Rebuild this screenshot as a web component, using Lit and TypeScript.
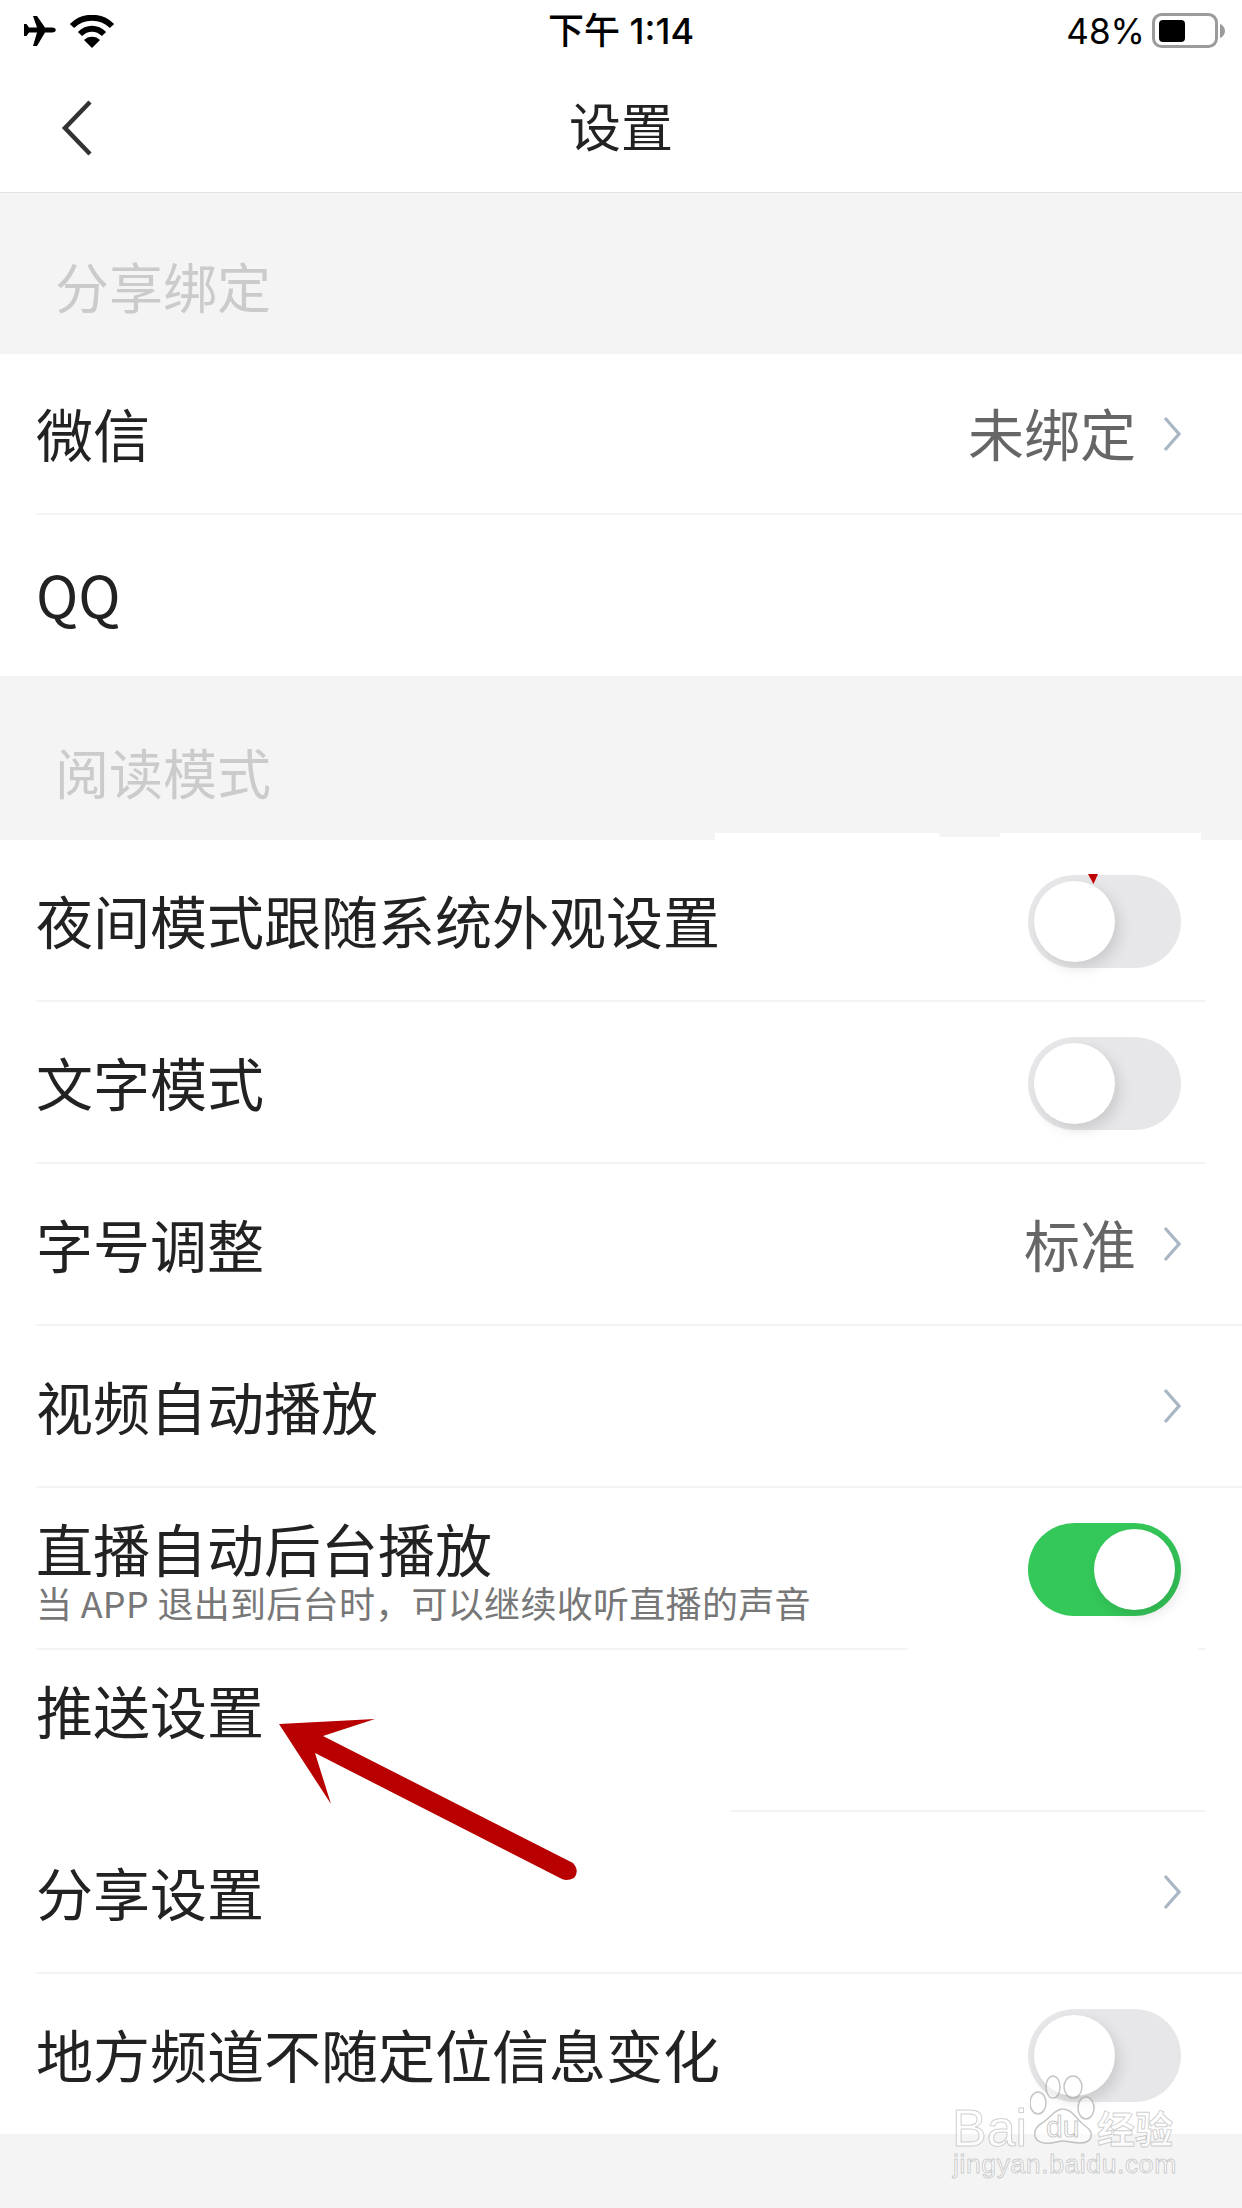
import {LitElement, css, html, svg, nothing} from 'lit'
import {customElement} from 'lit/decorators.js'

type Row = {
  label: string
  sub?: string
  value?: string
  chevron?: boolean
  toggle?: 'on' | 'off'
  line?: 'full' | 'inset' | 'none'
  raised?: boolean
}

const shareRows: Row[] = [
  {label: '微信', value: '未绑定', chevron: true, line: 'full'},
  {label: 'QQ', line: 'none'},
]

const readRows: Row[] = [
  {label: '夜间模式跟随系统外观设置', toggle: 'off', line: 'inset'},
  {label: '文字模式', toggle: 'off', line: 'inset'},
  {label: '字号调整', value: '标准', chevron: true, line: 'full'},
  {label: '视频自动播放', chevron: true, line: 'full'},
  {label: '直播自动后台播放', sub: '当 APP 退出到后台时，可以继续收听直播的声音', toggle: 'on', line: 'inset'},
  {label: '推送设置', raised: true, line: 'inset'},
  {label: '分享设置', chevron: true, line: 'full'},
  {label: '地方频道不随定位信息变化', toggle: 'off', line: 'full'},
]

const chevron = svg`<svg class="chev" width="18" height="36" viewBox="0 0 18 36"><path d="M2 2 L16 18 L2 34" fill="none" stroke="#a9b6c4" stroke-width="3.2"/></svg>`

@customElement('app-root')
export class AppRoot extends LitElement {
  static styles = css`
    :host {
      display: block;
      position: relative;
      width: 1242px;
      height: 2208px;
      overflow: hidden;
      background: #f4f4f4;
      font-family: "Noto Sans CJK SC", "Liberation Sans", sans-serif;
      color: #222;
    }

    .status {
      display: flex;
      align-items: center;
      justify-content: space-between;
      height: 62px;
      padding: 0 16px 0 24px;
      background: #fff;
      color: #000;
      font-size: 36px;
    }

    .status-left, .status-right {
      display: flex;
      align-items: center;
    }

    .status-left { width: 232px; gap: 13px; }
    .status-right { width: 240px; justify-content: flex-end; gap: 7px; }

    .time {
      font-family: Inter, "Noto Sans CJK SC", sans-serif;
      font-size: 36px;
      font-weight: 500;
      line-height: 62px;
    }

    .percent {
      font-family: Inter, "Liberation Sans", sans-serif;
      font-size: 35px;
      line-height: 62px;
    }

    .nav {
      display: flex;
      align-items: center;
      justify-content: center;
      position: relative;
      box-sizing: border-box;
      height: 131px;
      padding-bottom: 6px;
      background: #fff;
      border-bottom: 1px solid #e3e3e3;
      font-size: 52px;
      color: #222;
    }

    .back {
      position: absolute;
      left: 60px;
      top: 38px;
    }

    .section-head {
      display: flex;
      align-items: flex-end;
      box-sizing: border-box;
      height: 161px;
      padding: 0 0 36px 55px;
      font-size: 54px;
      line-height: 64px;
      color: #cbcbcb;
      background: #f4f4f4;
    }

    .section-head.second {
      height: 164px;
    }

    .row {
      height: 162px;
      box-sizing: border-box;
      padding-left: 36px;
      background: #fff;
    }

    .row.share {
      height: 161px;
    }

    .row-inner {
      display: flex;
      align-items: center;
      justify-content: space-between;
      box-sizing: border-box;
      height: 100%;
      border-bottom: 2px solid #f4f4f4;
    }

    .row.inset .row-inner {
      margin-right: 37px;
      padding-right: 24px;
    }

    .row.full .row-inner {
      padding-right: 61px;
    }

    .row.none .row-inner {
      border-bottom-color: transparent;
      padding-right: 61px;
    }

    .text {
      margin-bottom: 3px;
    }

    .label {
      font-size: 57px;
      line-height: 70px;
      color: #222;
    }

    .row.raised .label {
      margin-bottom: 39px;
    }

    .sub {
      font-size: 36px;
      line-height: 40px;
      letter-spacing: 0.3px;
      color: #777;
    }

    .right {
      display: flex;
      align-items: center;
      gap: 27px;
    }

    .value {
      margin-bottom: 3px;
      font-size: 56px;
      line-height: 70px;
      color: #666;
    }

    .chev {
      display: block;
    }

    .toggle {
      position: relative;
      flex: none;
      width: 153px;
      height: 93px;
      margin-top: 3px;
      border-radius: 47px;
      background: #e7e7e9;
    }

    .toggle.on {
      background: #34c759;
    }

    .knob {
      position: absolute;
      top: 6px;
      left: 6px;
      width: 81px;
      height: 81px;
      border-radius: 50%;
      background: #fff;
      box-shadow: 5px 6px 14px rgba(0, 0, 0, 0.12);
    }

    .toggle.on .knob {
      left: 66px;
    }

    .patch {
      position: absolute;
      background: #fff;
    }

    .patch.grey {
      background: #f4f4f4;
    }

    .marker {
      position: absolute;
      left: 1087px;
      top: 874px;
    }

    .arrow {
      position: absolute;
      left: 0;
      top: 0;
      pointer-events: none;
    }

    .watermark {
      position: absolute;
      left: 950px;
      top: 2070px;
      width: 230px;
      height: 130px;
      color: rgba(255, 255, 255, 0.7);
      font-family: "Liberation Sans", "Noto Sans CJK SC", sans-serif;
      -webkit-text-stroke: 1px rgba(150, 150, 150, 0.45);
    }

    .wm-top {
      position: absolute;
      left: 2px;
      top: 30px;
      font-size: 52px;
      line-height: 56px;
      white-space: nowrap;
    }

    .wm-cn {
      position: absolute;
      left: 147px;
      top: 32px;
      font-family: "Noto Sans CJK SC", sans-serif;
      font-size: 38px;
      line-height: 50px;
      font-weight: 700;
      white-space: nowrap;
    }

    .wm-url {
      position: absolute;
      left: 3px;
      top: 77px;
      font-size: 26.5px;
      line-height: 34px;
      letter-spacing: 0.6px;
      white-space: nowrap;
    }

    .paw {
      position: absolute;
      left: 80px;
      top: 5px;
    }

    .paw text {
      font-family: "Liberation Sans", sans-serif;
      font-size: 30px;
      stroke-width: 1px;
    }
  `

  renderRow(r: Row, extra = '') {
    return html`
      <div class="row ${r.line ?? 'none'} ${r.raised ? 'raised' : ''} ${extra}">
        <div class="row-inner">
          <div class="text">
            <div class="label">${r.label}</div>
            ${r.sub ? html`<div class="sub">${r.sub}</div>` : nothing}
          </div>
          <div class="right">
            ${r.value ? html`<div class="value">${r.value}</div>` : nothing}
            ${r.chevron ? chevron : nothing}
            ${r.toggle ? html`<div class="toggle ${r.toggle}"><div class="knob"></div></div>` : nothing}
          </div>
        </div>
      </div>
    `
  }

  render() {
    return html`
      <div class="status">
        <div class="status-left">
          <svg width="32" height="30" viewBox="0 0 32 30">
            <path fill="#000" d="M9 0 L13 0 L21 11.5 L28 11.5 C33 11.5 33 16.5 28 16.5 L21 16.5 L13 30 L9 30 L13 16.5 L5 16.5 L2.5 20 L0 20 L0 8 L2.5 8 L5 11.5 L13 11.5 Z"/>
          </svg>
          <svg width="46" height="33" viewBox="0 0 46 33">
            <path fill="none" stroke="#000" stroke-width="6" d="M3 11 C14 0 32 0 43 11"/>
            <path fill="none" stroke="#000" stroke-width="6" d="M11 19 C18 12 28 12 35 19"/>
            <path fill="#000" d="M15 25 C19 20.500 27 20.500 31 25 L23 33 Z"/>
          </svg>
        </div>
        <div class="time">下午 1:14</div>
        <div class="status-right">
          <span class="percent">48%</span>
          <svg width="74" height="36" viewBox="0 0 74 36">
            <rect x="1.500" y="1.500" width="63" height="32" rx="8" fill="none" stroke="#9b9b9b" stroke-width="3"/>
            <rect x="7" y="7" width="26" height="22" rx="4" fill="#000"/>
            <path d="M68 11 C71 12 73 15 73 18 C73 21 71 24 68 25 Z" fill="#9b9b9b"/>
          </svg>
        </div>
      </div>
      <div class="nav">
        <svg class="back" width="34" height="56" viewBox="0 0 34 56">
          <path d="M30 2 L5 28 L30 54" fill="none" stroke="#333" stroke-width="4.500"/>
        </svg>
        设置
      </div>

      <div class="section-head">分享绑定</div>
      ${shareRows.map((r) => this.renderRow(r, 'share'))}
      <div class="section-head second">阅读模式</div>
      ${readRows.map((r) => this.renderRow(r))}

      <div class="patch" style="left: 715px; top: 833px; width: 224px; height: 8px"></div>
      <div class="patch" style="left: 939px; top: 837px; width: 61px; height: 4px"></div>
      <div class="patch" style="left: 1000px; top: 833px; width: 201px; height: 8px"></div>
      <div class="patch" style="left: 908px; top: 1640px; width: 290px; height: 12px"></div>
      <div class="patch" style="left: 36px; top: 1804px; width: 694px; height: 12px"></div>
      <div class="patch grey" style="left: 0; top: 2134px; width: 1206px; height: 2px"></div>

      <svg class="marker" width="12" height="10" viewBox="0 0 12 10">
        <path d="M1 0 L11 0 L6.500 10 Z" fill="#bf0000"/>
      </svg>

      <svg class="arrow" width="1242" height="2208" viewBox="0 0 1242 2208">
        <path fill="#b80000" d="M279 1724 L375 1719 L323 1736 L573 1863 Q580 1871 574 1878 Q566 1882 560 1878 L315 1753 L331 1804 Z"/>
      </svg>

      <div class="watermark">
        <svg class="paw" width="66" height="70" viewBox="0 0 66 70">
          <g fill="rgba(255,255,255,0.55)" stroke="rgba(150,150,150,0.55)" stroke-width="1.500">
            <ellipse cx="23" cy="12" rx="7" ry="11"/>
            <ellipse cx="43" cy="12" rx="9" ry="11"/>
            <ellipse cx="8" cy="28" rx="8" ry="11"/>
            <ellipse cx="56" cy="33" rx="8" ry="11"/>
            <path d="M33 34 C42 34 46 44 54 50 C66 58 62 68 50 68 C42 68 38 66 33 66 C28 66 22 69 14 68 C2 66 2 54 12 48 C20 44 24 34 33 34 Z"/>
            <text x="16" y="62">du</text>
          </g>
        </svg>
        <div class="wm-top">Bai</div>
        <div class="wm-cn">经验</div>
        <div class="wm-url">jingyan.baidu.com</div>
      </div>
    `
  }
}
